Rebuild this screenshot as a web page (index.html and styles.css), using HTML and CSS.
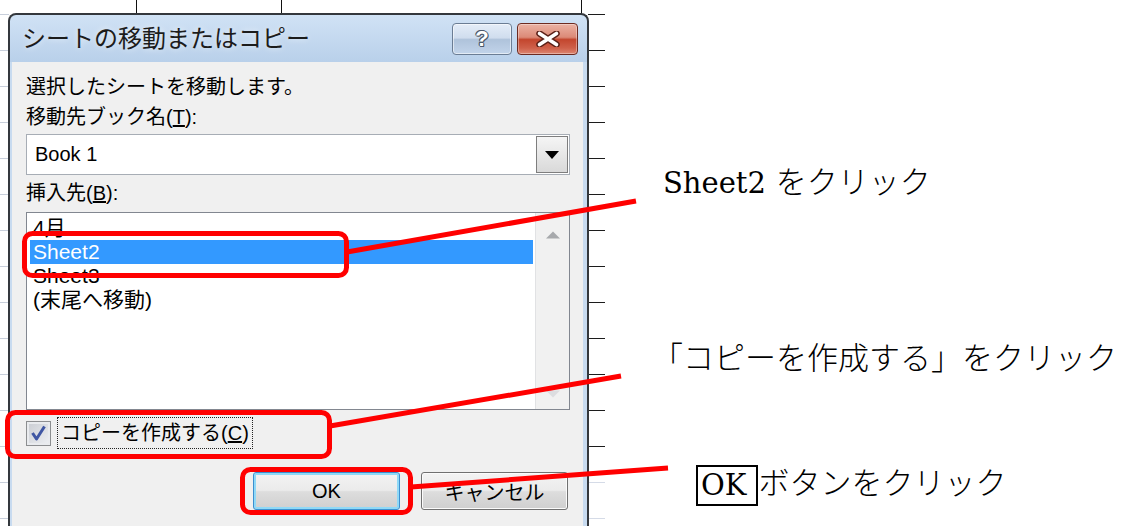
FILE: index.html
```html
<!DOCTYPE html>
<html lang="ja">
<head>
<meta charset="utf-8">
<title>シートの移動またはコピー</title>
<link rel="stylesheet" href="styles.css">
</head>
<body>
<div class="stage">
  <div class="desk">
    <div class="sheet">
      <div class="rail rail-left"></div>
      <div class="col-tops"></div>
      <div class="rail rail-right"></div>
    </div>

    <section class="dialog">
      <header class="titlebar">
        <h1 class="title">シートの移動またはコピー</h1>
        <div class="caption-buttons">
          <button class="cap cap-help" type="button">?</button>
          <button class="cap cap-close" type="button" aria-label="閉じる">
            <svg width="24" height="16" viewBox="0 0 24 16">
              <path d="M3.5 2.5 L20.5 13.5 M20.5 2.5 L3.5 13.5" stroke="#5b2118" stroke-width="6.5" stroke-linecap="round" fill="none"/>
              <path d="M3.5 2.5 L20.5 13.5 M20.5 2.5 L3.5 13.5" stroke="#ffffff" stroke-width="3.6" stroke-linecap="round" fill="none"/>
            </svg>
          </button>
        </div>
      </header>

      <div class="client">
        <p class="label">選択したシートを移動します。</p>
        <p class="label">移動先ブック名(<u>T</u>):</p>
        <div class="combo">
          <span class="combo-value">Book 1</span>
          <span class="combo-drop"><i class="tri-down"></i></span>
        </div>
        <p class="label label-gap">挿入先(<u>B</u>):</p>
        <div class="listbox">
          <ul class="items">
            <li>4月</li>
            <li class="selected">Sheet2</li>
            <li>Sheet3</li>
            <li>(末尾へ移動)</li>
          </ul>
          <div class="vscroll">
            <svg width="16" height="8" viewBox="0 0 16 8"><path d="M1 7.5 L8 0.5 L15 7.5 Z" fill="#a7a9ac"/></svg>
            <svg width="16" height="8" viewBox="0 0 16 8"><path d="M1 0.5 L8 7.5 L15 0.5 Z" fill="#dcdde0"/></svg>
          </div>
        </div>
        <div class="check-row">
          <span class="checkbox">
            <svg width="23" height="23" viewBox="0 0 23 23">
              <path d="M5.5 11 L9.5 17 L17.5 4.5" stroke="#3f56a3" stroke-width="3" fill="none" stroke-linejoin="round"/>
            </svg>
          </span>
          <span class="check-label">コピーを作成する(<u>C</u>)</span>
        </div>
        <div class="button-row">
          <button class="btn btn-default" type="button">OK</button>
          <button class="btn" type="button">キャンセル</button>
        </div>
      </div>
    </section>
  </div>

  <div class="notes">
    <p class="note note-sheet"><span class="lat">Sheet2</span> をクリック</p>
    <p class="note note-copy">「コピーを作成する」をクリック</p>
    <p class="note note-ok"><span class="lat boxed">OK</span>ボタンをクリック</p>
  </div>

  <svg class="marks" width="1128" height="526" viewBox="0 0 1128 526">
    <g fill="none" stroke="#ff0000" stroke-width="5">
      <rect x="24.5" y="233.5" width="322" height="42" rx="8"/>
      <rect x="7.5" y="412.5" width="322" height="44" rx="8"/>
      <rect x="242.5" y="469.5" width="168" height="43" rx="8"/>
      <line x1="347" y1="252" x2="636" y2="201"/>
      <line x1="330" y1="426" x2="621" y2="376"/>
      <line x1="411" y1="487" x2="668" y2="468"/>
    </g>
  </svg>
</div>
</body>
</html>
```

FILE: styles.css
```css
* {
  box-sizing: border-box;
}

html,
body {
  margin: 0;
}

body {
  width: 1128px;
  height: 526px;
  overflow: hidden;
  background: #ffffff;
  font-family: "Liberation Sans", "Noto Sans CJK JP", sans-serif;
  color: #000;
}

.stage {
  position: relative;
  display: flex;
  width: 1128px;
  height: 526px;
  overflow: hidden;
}

/* worksheet peeking out behind the dialog */
.desk {
  position: relative;
  flex: none;
  width: 605px;
  height: 526px;
}

.sheet {
  position: absolute;
  inset: 0;
  display: grid;
  grid-template-columns: 9px 1fr 17px;
  grid-template-rows: 14px 1fr;
}

.rail-left {
  grid-column: 1;
  grid-row: 1 / 3;
  background: repeating-linear-gradient(to bottom,
      transparent 0 14px, #c8cfdb 14px 15px, transparent 15px 36px);
}

.col-tops {
  grid-column: 2;
  grid-row: 1;
  background:
    linear-gradient(#111, #111) 127px 0 / 1px 100% no-repeat,
    linear-gradient(#111, #111) 272px 0 / 1px 100% no-repeat,
    linear-gradient(#111, #111) 572px 0 / 1px 100% no-repeat;
}

.rail-right {
  grid-column: 3;
  grid-row: 1 / 3;
  background:
    repeating-linear-gradient(to bottom,
      transparent 0 14px, #1c1c1c 14px 15px, transparent 15px 36px) 0 0 / 100% 460px no-repeat,
    repeating-linear-gradient(to bottom,
      transparent 0 14px, #d5dbe7 14px 15px, transparent 15px 36px);
}

/* the dialog window */
.dialog {
  position: absolute;
  left: 8px;
  top: 13px;
  width: 581px;
  height: 513px;
  display: flex;
  flex-direction: column;
  padding: 0 4px 0 2px;
  border: 2px solid #34383d;
  border-bottom: none;
  border-radius: 8px 8px 0 0;
  background: linear-gradient(to bottom,
      #d0e2f5 0px, #b9d0ea 47px, #c8dbf0 47px, #c8dbf0 100%);
}

.titlebar {
  flex: none;
  height: 47px;
  display: flex;
  align-items: flex-start;
  justify-content: space-between;
  padding: 8px 5px 0 10px;
}

.title {
  margin: 0;
  font-size: 24px;
  font-weight: 400;
  line-height: 32px;
  color: #1c1c1c;
  white-space: nowrap;
  text-shadow: 0 0 6px rgba(255, 255, 255, 0.7);
}

.caption-buttons {
  display: flex;
  gap: 5px;
}

.cap {
  height: 32px;
  padding: 0;
  border: 1px solid;
  border-radius: 4px;
  display: flex;
  align-items: center;
  justify-content: center;
}

.cap-help {
  width: 60px;
  border-color: #6b7d94;
  background: linear-gradient(to bottom,
      #e4edf8 0%, #d0ddee 46%, #afc3db 52%, #c2d4ea 100%);
  box-shadow: inset 0 0 0 1px rgba(255, 255, 255, 0.55);
  font: bold 22px "Liberation Sans", sans-serif;
  color: #ffffff;
  text-shadow:
    1px 0 0 #4d5a6b, -1px 0 0 #4d5a6b,
    0 1px 0 #4d5a6b, 0 -1px 0 #4d5a6b,
    1px 1px 0 #4d5a6b, -1px -1px 0 #4d5a6b;
}

.cap-close {
  width: 61px;
  border-color: #6d2a20;
  background: linear-gradient(to bottom,
      #ebb2a4 0%, #dc8a77 44%, #c3462e 52%, #cf604a 80%, #dd8670 100%);
  box-shadow: inset 0 0 0 1px rgba(255, 255, 255, 0.35);
}

.client {
  flex: 1;
  background: #f0f0f0;
  padding: 10px 13px 0 14px;
}

.label {
  margin: 0;
  font-size: 20px;
  line-height: 30px;
  white-space: nowrap;
}

.label-gap {
  margin-top: 3px;
}

/* combobox */
.combo {
  margin-top: 2px;
  height: 41px;
  display: flex;
  border: 1px solid #a7adb5;
  background: #ffffff;
}

.combo-value {
  flex: 1;
  padding-left: 8px;
  font-size: 20px;
  line-height: 39px;
}

.combo-drop {
  width: 32px;
  margin: 1px;
  border: 1px solid #7e7e7e;
  background: linear-gradient(to bottom, #f5f5f5, #d9d9d9);
  display: flex;
  align-items: center;
  justify-content: center;
}

.tri-down {
  width: 0;
  height: 0;
  border-left: 7px solid transparent;
  border-right: 7px solid transparent;
  border-top: 8px solid #000;
}

/* sheet list */
.listbox {
  margin-top: 4px;
  height: 198px;
  display: flex;
  border: 1px solid #828790;
  background: #ffffff;
}

.items {
  flex: 1;
  margin: 0;
  padding: 3px 2px 0 3px;
  list-style: none;
  overflow: hidden;
}

.items li {
  height: 24px;
  line-height: 24px;
  padding-left: 3px;
  font-size: 21px;
  white-space: nowrap;
}

.items .selected {
  background: #3399ff;
  color: #ffffff;
}

.vscroll {
  width: 34px;
  display: flex;
  flex-direction: column;
  justify-content: space-between;
  align-items: center;
  padding: 18px 0 11px;
  background: #f1f1f1;
  border-left: 1px solid #e1e2e4;
}

/* checkbox row */
.check-row {
  margin-top: 7px;
  height: 32px;
  display: flex;
  align-items: center;
  gap: 6px;
}

.checkbox {
  width: 25px;
  height: 25px;
  border: 1px solid #8c8e90;
  background: linear-gradient(135deg, #c9ccd2, #eef0f3);
  box-shadow: inset 0 0 0 2px #e9ebee;
  display: flex;
  align-items: center;
  justify-content: center;
}

.check-label {
  height: 32px;
  line-height: 30px;
  padding: 0 3px;
  border: 1px dotted #222;
  font-size: 20px;
  white-space: nowrap;
}

/* push buttons */
.button-row {
  margin-top: 22px;
  height: 40px;
  display: flex;
  align-items: center;
  justify-content: flex-end;
  gap: 21px;
  padding-right: 2px;
}

.btn {
  width: 147px;
  height: 38px;
  padding: 0;
  border: 1px solid #707070;
  border-radius: 3px;
  background: linear-gradient(to bottom,
      #f3f3f3 0%, #ebebeb 48%, #dddddd 52%, #cfcfcf 100%);
  box-shadow: inset 0 0 0 1px #fbfbfb;
  font: 20px "Liberation Sans", "Noto Sans CJK JP", sans-serif;
  color: #000;
}

.btn-default {
  border-color: #3c8fcf;
  box-shadow: inset 0 0 0 2px #8fd9f7;
}

/* callout captions */
.notes {
  flex: 1;
  padding-top: 162px;
  font-family: "DejaVu Serif", "Noto Sans CJK JP", serif;
  font-size: 31px;
  font-weight: 300;
  color: #000;
}

.note {
  margin: 0;
  height: 40px;
  line-height: 40px;
  white-space: nowrap;
}

.note-sheet {
  margin-left: 58px;
}

.note-copy {
  margin-left: 47px;
  margin-top: 136px;
}

.note-ok {
  margin-left: 91px;
  margin-top: 85px;
}

.lat {
  font-size: 29px;
  font-weight: 400;
}

.boxed {
  display: inline-block;
  vertical-align: middle;
  height: 41px;
  line-height: 37px;
  padding: 0 10px 0 3px;
  border: 2px solid #000;
}

.marks {
  position: absolute;
  left: 0;
  top: 0;
  pointer-events: none;
}
```
